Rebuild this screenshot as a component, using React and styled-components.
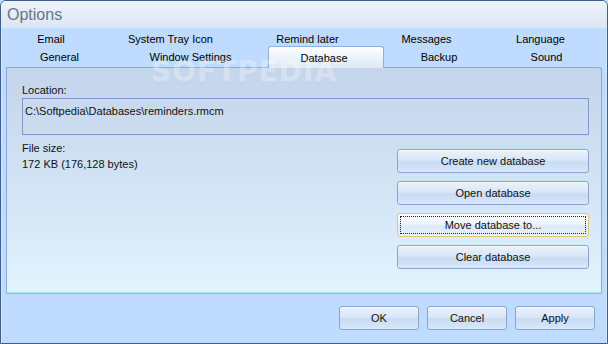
import React from 'react';
import styled, { createGlobalStyle } from 'styled-components';

const GlobalStyle = createGlobalStyle`
    html, body {
        margin: 0;
        padding: 0;
        background: #bfdbff;
    }
    body {
        font-family: "Liberation Sans", Arial, sans-serif;
        font-size: 11px;
        color: #111;
    }
`

const Window = styled.div`
    position: relative;
    width: 608px;
    height: 344px;
    box-sizing: border-box;
    display: flex;
    flex-direction: column;
    background: #bfdbff;
    border: 1px solid #3e5f8c;
    border-radius: 6px 6px 0 0;
    overflow: hidden;
`

const TitleBar = styled.div`
    height: 27px;
    flex: none;
    display: flex;
    align-items: center;
    padding-left: 6px;
    font-size: 16px;
    color: #66758d;
    background: linear-gradient(#eef3fa, #dbe6f4);
`

const Body = styled.div`
    flex: 1;
    display: flex;
    flex-direction: column;
    padding: 0 4px;
    border-left: 1px solid #d6e6fb;
    border-right: 1px solid #d6e6fb;
`

const TabStrip = styled.div`
    height: 39px;
    display: flex;
    flex-direction: column;
`

const TabRow = styled.div`
    display: flex;
    height: ${p => p.$h}px;
`

const Tab = styled.div`
    flex: none;
    width: ${p => p.$w}px;
    display: flex;
    align-items: center;
    justify-content: center;
    color: #000;
    padding-top: ${p => p.$pt || 0}px;
    box-sizing: border-box;
`

const ActiveTab = styled(Tab)`
    position: relative;
    z-index: 1;
    margin-bottom: -1px;
    height: 22px;
    background: linear-gradient(#ffffff, #e9f1fb 60%, #dde8f6);
    border: 1px solid #8db0dc;
    border-bottom: none;
    border-radius: 3px 3px 0 0;
    padding-right: 4px;
`

const Panel = styled.div`
    height: 226px;
    box-sizing: border-box;
    display: flex;
    flex-direction: column;
    padding: 15px 12px 0 15px;
    border: 1px solid #86a9de;
    border-bottom-color: #a9e9fa;
    border-radius: 0 3px 0 0;
    background: linear-gradient(#c4d5ec, #d3e4f5 55%, #e1f4fd);
    box-shadow: 0 1px 0 #9db4d6;
`

const Label = styled.div`
    line-height: 14px;
    margin-bottom: ${p => p.$mb || 0}px;
`

const PathBox = styled.div`
    height: 37px;
    box-sizing: border-box;
    border: 1px solid #7b9ccb;
    padding: 5px 2px;
    line-height: 14px;
`

const Lower = styled.div`
    display: flex;
    justify-content: space-between;
    margin-top: 6px;
`

const Info = styled.div`
    display: flex;
    flex-direction: column;
    gap: 2px;
`

const ButtonColumn = styled.div`
    display: flex;
    flex-direction: column;
    gap: 8px;
    margin-top: 8px;
`

const Button = styled.button`
    position: relative;
    width: ${p => p.$w}px;
    height: 24px;
    padding: 0;
    font-family: "Liberation Sans", Arial, sans-serif;
    font-size: 11px;
    color: #111;
    border: 1px solid ${p => p.$focus ? '#e3c66e' : '#8aa5cc'};
    border-radius: 3px;
    background: ${p => p.$focus
        ? 'linear-gradient(#fbfcfe, #eef4fb 45%, #dce9f8 55%, #e8f1fb)'
        : 'linear-gradient(#eaf2fc, #dae7f7 45%, #c7dbf3 55%, #d9e8f9)'};
    box-shadow: inset 0 1px 0 #f6faff;
    cursor: default;
`

const FocusRing = styled.span`
    position: absolute;
    inset: 2px;
    border: 1px dotted #222;
`

const Footer = styled.div`
    flex: 1;
    display: flex;
    justify-content: flex-end;
    align-items: flex-start;
    gap: 8px;
    padding: 13px 7px 0 0;
`

const Watermark = styled.div`
    position: absolute;
    left: 150px;
    top: 54px;
    font-family: "DejaVu Sans", sans-serif;
    font-weight: bold;
    font-size: 28px;
    letter-spacing: 1px;
    color: rgba(255, 255, 255, 0.3);
    pointer-events: none;
    z-index: 2;
`

const topTabs = [
    { name: 'Email', w: 90 },
    { name: 'System Tray Icon', w: 149 },
    { name: 'Remind later', w: 125 },
    { name: 'Messages', w: 113 },
    { name: 'Language', w: 115 },
]

const bottomTabs = [
    { name: 'General', w: 107 },
    { name: 'Window Settings', w: 155 },
    { name: 'Database', w: 116, active: true },
    { name: 'Backup', w: 110 },
    { name: 'Sound', w: 105 },
]

const actions = ['Create new database', 'Open database', 'Move database to...', 'Clear database']

const App = () => {
    return (
        <>
            <GlobalStyle />
            <Window>
                <TitleBar>Options</TitleBar>
                <Body>
                    <TabStrip>
                        <TabRow $h={18}>
                            {topTabs.map(t => (
                                <Tab key={t.name} $w={t.w} $pt={3}>{t.name}</Tab>
                            ))}
                        </TabRow>
                        <TabRow $h={21}>
                            {bottomTabs.map(t => t.active ? (
                                <ActiveTab key={t.name} $w={t.w}>{t.name}</ActiveTab>
                            ) : (
                                <Tab key={t.name} $w={t.w} $pt={1}>{t.name}</Tab>
                            ))}
                        </TabRow>
                    </TabStrip>
                    <Panel>
                        <Label $mb={1}>Location:</Label>
                        <PathBox>C:\Softpedia\Databases\reminders.rmcm</PathBox>
                        <Lower>
                            <Info>
                                <Label>File size:</Label>
                                <Label>172 KB (176,128 bytes)</Label>
                            </Info>
                            <ButtonColumn>
                                {actions.map(a => (
                                    <Button key={a} $w={192} $focus={a === 'Move database to...'}>
                                        {a === 'Move database to...' && <FocusRing />}
                                        {a}
                                    </Button>
                                ))}
                            </ButtonColumn>
                        </Lower>
                    </Panel>
                    <Footer>
                        <Button $w={80}>OK</Button>
                        <Button $w={80}>Cancel</Button>
                        <Button $w={80}>Apply</Button>
                    </Footer>
                </Body>
                <Watermark>SOFTPEDIA</Watermark>
            </Window>
        </>
    )
}

export default App;
